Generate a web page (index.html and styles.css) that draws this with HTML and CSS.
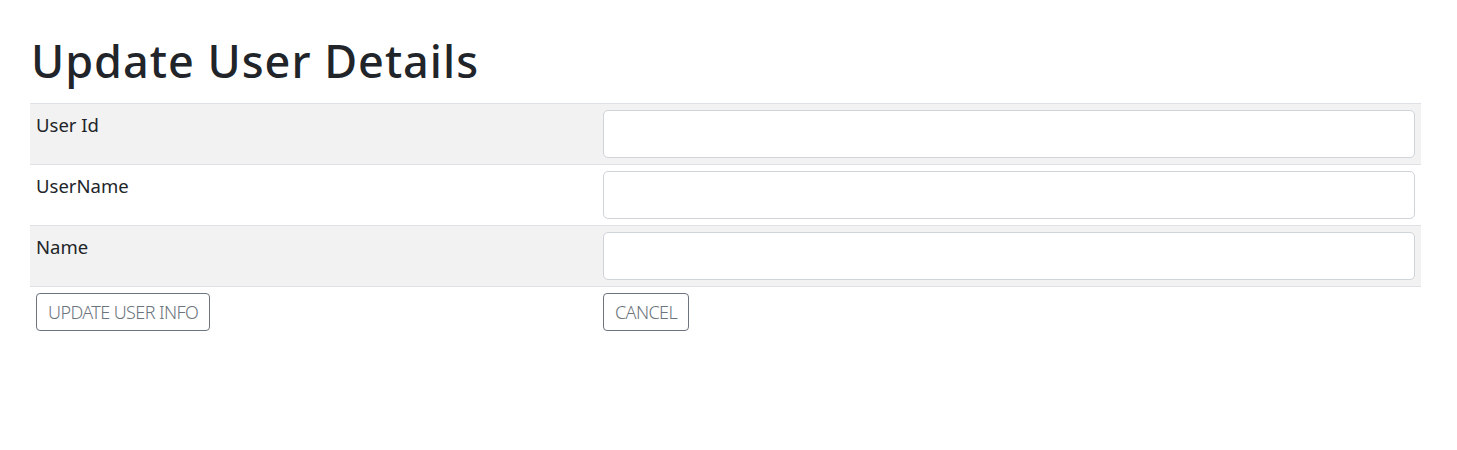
FILE: index.html
```html
<!DOCTYPE html>
<html lang="en">
<head>
<meta charset="utf-8">
<title>Update User Details</title>
<link rel="stylesheet" href="styles.css">
</head>
<body>
<main class="container">
  <h1 class="title">Update User Details</h1>
  <div class="table">
    <div class="row striped">
      <div class="cell label">User Id</div>
      <div class="cell"><input class="field" type="text"></div>
    </div>
    <div class="row">
      <div class="cell label">UserName</div>
      <div class="cell"><input class="field" type="text"></div>
    </div>
    <div class="row striped">
      <div class="cell label">Name</div>
      <div class="cell"><input class="field" type="text"></div>
    </div>
    <div class="row">
      <div class="cell"><button class="btn" type="button">Update User Info</button></div>
      <div class="cell"><button class="btn" type="button">Cancel</button></div>
    </div>
  </div>
</main>
</body>
</html>
```
FILE: styles.css
```css
* { box-sizing: border-box; }
body {
  margin: 0;
  font-family: "Noto Sans", "Open Sans", sans-serif;
  font-size: 16px;
  line-height: 1.5;
  color: #212529;
  background: #fff;
}
.container {
  padding: 34px 36px 0 30px;
}
.title {
  margin: 0 0 15px;
  font-size: 45px;
  font-weight: 500;
  line-height: 54px;
  letter-spacing: 1px;
  padding-left: 1px;
}
.table {
  width: 1391px;
}
.row {
  display: grid;
  grid-template-columns: 567px 1fr;
  border-top: 1px solid #dee2e6;
}
.striped { background: #f2f2f2; }
.cell {
  padding: 6px;
}
.label {
  font-size: 18.5px;
  line-height: 29px;
}
.field {
  display: block;
  width: 100%;
  height: 48px;
  border: 1px solid #ced4da;
  border-radius: 5px;
  background: #fff;
  font: inherit;
}
.btn {
  height: 38px;
  padding: 0 11px;
  border: 1px solid #6c757d;
  border-radius: 4px;
  background: transparent;
  color: #6c757d;
  font-family: inherit;
  font-size: 18px;
  font-weight: 300;
  letter-spacing: -0.6px;
  text-transform: uppercase;
}
```
